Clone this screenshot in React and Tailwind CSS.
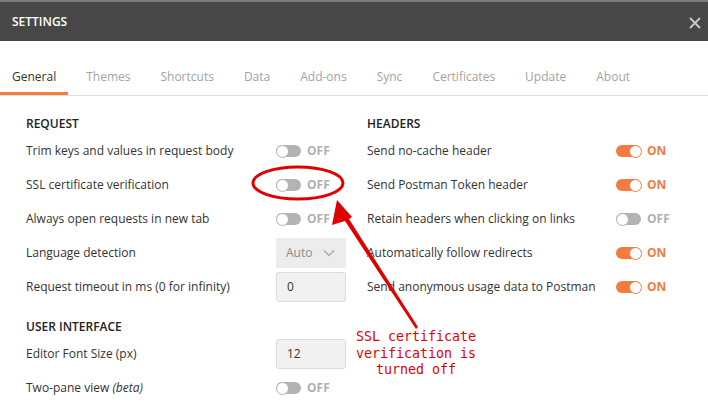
import React from 'react';

const ORANGE = 'bg-[#f47b3e]';

const Toggle = ({ on }) => (
  <div className="flex items-center gap-[6px]">
    <div
      className={`relative w-[25px] h-[12px] rounded-full ${on ? ORANGE : 'bg-[#b3b3b3]'}`}
    >
      <div
        className={`absolute top-[-0.5px] w-[13px] h-[13px] rounded-full bg-white border ${
          on ? 'right-[-0.5px] border-[#f47b3e]' : 'left-[-0.5px] border-[#b3b3b3]'
        }`}
      />
    </div>
    <span className={`text-[12px] font-bold ${on ? 'text-[#f47b3e]' : 'text-[#b0b0b0]'}`}>
      {on ? 'ON' : 'OFF'}
    </span>
  </div>
);

const Row = ({ label, children, ctrl = 'w-[250px]' }) => (
  <div className="flex items-center h-[34px]">
    <div className={`${ctrl} shrink-0 text-[12px] text-[#333]`}>{label}</div>
    {children}
  </div>
);

const Section = ({ title }) => (
  <div className="h-[20px] flex items-center text-[12px] font-semibold text-[#222]">{title}</div>
);

const tabs = ['General', 'Themes', 'Shortcuts', 'Data', 'Add-ons', 'Sync', 'Certificates', 'Update', 'About'];

export default function App() {
  return (
    <div
      className="relative w-[708px] h-[404px] overflow-hidden bg-white"
      style={{ fontFamily: '"Open Sans", "Noto Sans", sans-serif' }}
    >
      <div className="h-[2px] bg-[#7b7b7b]" />
      <div className="h-[39px] bg-[#474747] flex items-center justify-between pl-[12px] pr-[6px]">
        <span className="text-white text-[12px] font-semibold">SETTINGS</span>
        <svg width="14" height="14" viewBox="0 0 14 14" className="mt-[2px]">
          <path d="M2 2 L12 12 M12 2 L2 12" stroke="#c8c8c8" strokeWidth="1.8" />
        </svg>
      </div>

      <div className="mt-[18px] flex border-b border-[#dddddd]">
        {tabs.map((t, i) => (
          <div
            key={t}
            className={`h-[36px] flex items-center px-[12px] mr-[6px] text-[12px] ${
              i === 0 ? 'text-[#333] border-b-[3px] border-[#f47b3e] pt-[3px] pr-[12px]' : 'text-[#a3a3a3]'
            }`}
          >
            {t}
          </div>
        ))}
      </div>

      <div className="flex pl-[26px] pt-[18px]">
        <div className="w-[341px] shrink-0">
          <Section title="REQUEST" />
          <Row label="Trim keys and values in request body"><Toggle /></Row>
          <Row label="SSL certificate verification"><Toggle /></Row>
          <Row label="Always open requests in new tab"><Toggle /></Row>
          <Row label="Language detection">
            <div className="w-[70px] h-[30px] bg-[#ececec] flex items-center justify-between pl-[10px] pr-[11px] text-[12px] text-[#888]">
              <span>Auto</span>
              <svg width="12" height="8" viewBox="0 0 12 8">
                <path d="M1 1.5 L6 6.5 L11 1.5" stroke="#aaa" strokeWidth="1.3" fill="none" />
              </svg>
            </div>
          </Row>
          <Row label="Request timeout in ms (0 for infinity)">
            <div className="w-[70px] h-[30px] bg-[#f1f1f1] border border-[#dcdcdc] rounded-[3px] flex items-center pl-[10px] text-[12px] text-[#333]">
              0
            </div>
          </Row>
          <div className="h-[13px]" />
          <Section title="USER INTERFACE" />
          <Row label="Editor Font Size (px)">
            <div className="w-[70px] h-[30px] bg-[#f1f1f1] border border-[#dcdcdc] rounded-[3px] flex items-center pl-[10px] text-[12px] text-[#333]">
              12
            </div>
          </Row>
          <Row label={<>Two-pane view <i>(beta)</i></>}><Toggle /></Row>
        </div>

        <div className="flex-1">
          <Section title="HEADERS" />
          <Row label="Send no-cache header" ctrl="w-[249px]"><Toggle on /></Row>
          <Row label="Send Postman Token header" ctrl="w-[249px]"><Toggle on /></Row>
          <Row label="Retain headers when clicking on links" ctrl="w-[249px]"><Toggle /></Row>
          <Row label="Automatically follow redirects" ctrl="w-[249px]"><Toggle on /></Row>
          <Row label="Send anonymous usage data to Postman" ctrl="w-[249px]"><Toggle on /></Row>
        </div>
      </div>

      {/* annotation overlay */}
      <svg className="absolute left-0 top-0 pointer-events-none" width="708" height="404">
        <ellipse cx="298" cy="183" rx="45" ry="16" fill="none" stroke="#e00000" strokeWidth="3" />
        <polygon points="416,329 418,327 349,219 352,217 337,200 332,225 345,221" fill="#e00000" />
      </svg>
      <div
        className="absolute left-[346px] top-[329px] w-[140px] text-center text-[13.3px] leading-[16.5px] text-[#e00000]"
        style={{ fontFamily: '"DejaVu Sans Mono", monospace' }}
      >
        SSL certificate
        <br />
        verification is
        <br />
        turned off
      </div>
    </div>
  );
}
